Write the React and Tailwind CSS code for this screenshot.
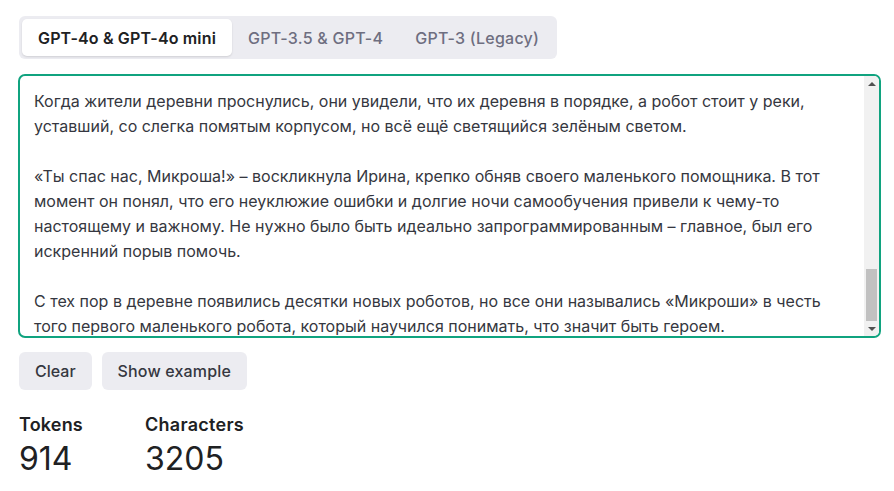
import React from 'react';

const tabs = ['GPT-4o & GPT-4o mini', 'GPT-3.5 & GPT-4', 'GPT-3 (Legacy)'];

const lines = [
    'Когда жители деревни проснулись, они увидели, что их деревня в порядке, а робот стоит у реки,',
    'уставший, со слегка помятым корпусом, но всё ещё светящийся зелёным светом.',
    '',
    '«Ты спас нас, Микроша!» – воскликнула Ирина, крепко обняв своего маленького помощника. В тот',
    'момент он понял, что его неуклюжие ошибки и долгие ночи самообучения привели к чему-то',
    'настоящему и важному. Не нужно было быть идеально запрограммированным – главное, был его',
    'искренний порыв помочь.',
    '',
    'С тех пор в деревне появились десятки новых роботов, но все они назывались «Микроши» в честь',
    'того первого маленького робота, который научился понимать, что значит быть героем.',
];

export default function App() {
    return (
        <div className="min-h-screen bg-white px-[18px] pt-4 text-[#353740] font-['Inter',sans-serif]">
            {/* model tabs */}
            <div className="ml-[1px] inline-flex items-center rounded-md bg-[#ececf1] p-[3px] pr-[2px]">
                {tabs.map((t, i) => (
                    <button
                        key={t}
                        className={
                            i === 0
                                ? 'h-[37px] rounded-[5px] bg-white px-4 text-[16px] font-semibold tracking-[0.01em] text-[#202123] shadow-[0_1px_2px_rgba(0,0,0,0.12)]'
                                : 'h-[37px] px-4 text-[16px] font-medium tracking-[0.015em] text-[#6e6e80]'
                        }
                    >
                        {t}
                    </button>
                ))}
            </div>

            {/* text box */}
            <div className="mt-[15px] flex h-[264px] w-[863px] overflow-hidden rounded-[7px] border-2 border-[#10a37f] bg-white">
                <div className="flex-1 overflow-hidden pl-[14px] pt-[13px] text-[16px] leading-[25px] text-[#353740]">
                    {lines.map((l, i) => (
                        <div key={i} className="h-[25px] whitespace-nowrap">{l}</div>
                    ))}
                </div>
                {/* scrollbar */}
                <div className="flex w-[15px] flex-col bg-[#f1f1f1]">
                    <div className="flex h-[15px] items-center justify-center">
                        <div className="h-0 w-0 border-x-[4px] border-b-[4px] border-x-transparent border-b-[#505050]" />
                    </div>
                    <div className="flex flex-1 flex-col justify-end px-[2px]">
                        <div className="h-[52px] bg-[#c1c1c1]" />
                    </div>
                    <div className="flex h-[15px] items-center justify-center">
                        <div className="h-0 w-0 border-x-[4px] border-t-[4px] border-x-transparent border-t-[#505050]" />
                    </div>
                </div>
            </div>

            {/* actions */}
            <div className="mt-[14px] flex gap-[10px] pl-[1px]">
                <button className="h-[38px] rounded-md bg-[#ececf1] px-4 text-[16px] font-medium text-[#353740]">Clear</button>
                <button className="h-[38px] rounded-md bg-[#ececf1] px-4 text-[16px] font-medium tracking-[0.01em] text-[#353740]">Show example</button>
            </div>

            {/* stats */}
            <div className="mt-[23px] flex pl-[1px]">
                <div className="w-[126px]">
                    <div className="text-[18px] font-semibold leading-6 tracking-[0.01em] text-[#202123]">Tokens</div>
                    <div className="mt-[2px] text-[32px] leading-[40px] text-[#202123]">914</div>
                </div>
                <div>
                    <div className="text-[18px] font-semibold leading-6 tracking-[0.015em] text-[#202123]">Characters</div>
                    <div className="mt-[2px] text-[32px] leading-[40px] text-[#202123]">3205</div>
                </div>
            </div>
        </div>
    );
}
